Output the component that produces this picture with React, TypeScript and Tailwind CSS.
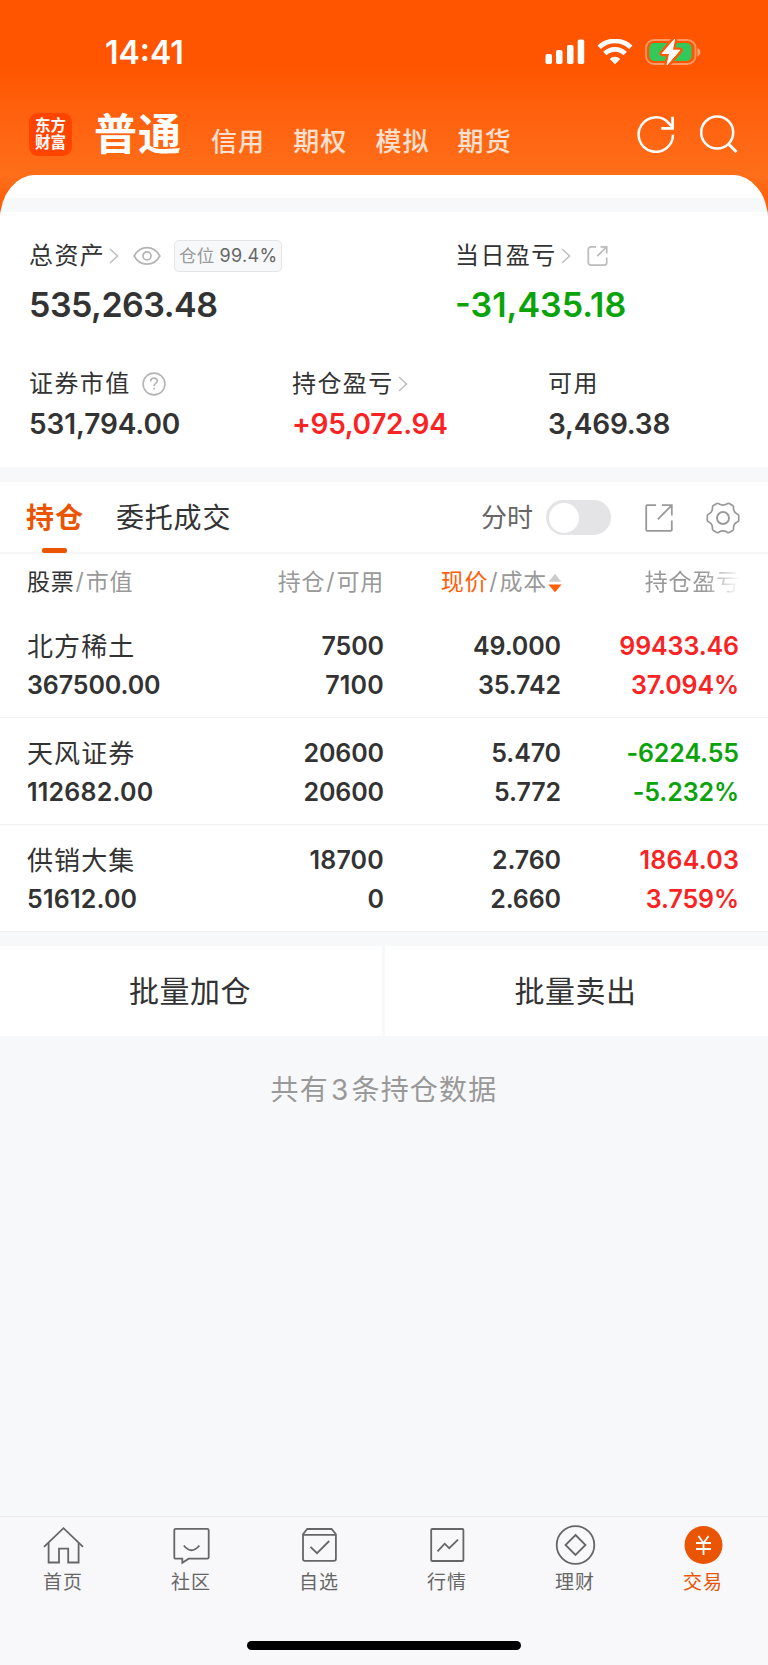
import type { ReactNode } from 'react';
import clsx from 'clsx';

type Tone = 'up' | 'down';

interface Holding {
  name: string;
  marketValue: string;
  amount: string;
  available: string;
  price: string;
  cost: string;
  profit: string;
  profitRate: string;
  tone: Tone;
}

const HOLDINGS: Holding[] = [
  {
    name: '北方稀土',
    marketValue: '367500.00',
    amount: '7500',
    available: '7100',
    price: '49.000',
    cost: '35.742',
    profit: '99433.46',
    profitRate: '37.094%',
    tone: 'up',
  },
  {
    name: '天风证券',
    marketValue: '112682.00',
    amount: '20600',
    available: '20600',
    price: '5.470',
    cost: '5.772',
    profit: '-6224.55',
    profitRate: '-5.232%',
    tone: 'down',
  },
  {
    name: '供销大集',
    marketValue: '51612.00',
    amount: '18700',
    available: '0',
    price: '2.760',
    cost: '2.660',
    profit: '1864.03',
    profitRate: '3.759%',
    tone: 'up',
  },
];

const ACCOUNT_TABS = ['信用', '期权', '模拟', '期货'];

function SignalIcon() {
  return (
    <svg width="40" height="26" viewBox="0 0 40 26" fill="#fff">
      <rect x="0.5" y="15" width="6.5" height="10" rx="1.8" />
      <rect x="11" y="11" width="6.5" height="14" rx="1.8" />
      <rect x="22" y="6" width="6.5" height="19" rx="1.8" />
      <rect x="32.7" y="0.5" width="6.5" height="24.5" rx="1.8" />
    </svg>
  );
}

function WifiIcon() {
  return (
    <svg width="36" height="26" viewBox="0 0 36 26" fill="none" stroke="#fff">
      <path d="M2.2 8.3a22.800 22.800 0 0 1 31.600 0" strokeWidth="4.800" />
      <path d="M7.800 14.500a14.600 14.600 0 0 1 20.400 0" strokeWidth="4.600" />
      <path d="M18 25.200l-5.300-5.200a7.600 7.600 0 0 1 10.600 0z" fill="#fff" stroke="none" />
    </svg>
  );
}

function BatteryIcon() {
  return (
    <svg width="57" height="28" viewBox="0 0 57 28" fill="none">
      <rect x="1" y="2" width="49.5" height="24" rx="8" stroke="#fff" strokeOpacity="0.4" strokeWidth="1.8" />
      <path d="M52.5 10v8.400c1.600-.7 2.800-2.300 2.800-4.200s-1.200-3.500-2.800-4.200z" fill="#fff" fillOpacity="0.5" />
      <rect x="4.200" y="5" width="42.500" height="18" rx="5" fill="#34c759" />
      <path
        d="M29.600 1 17.200 15.400h7.400L22 27.200 34.800 12.200h-7.400z"
        fill="#fff"
        stroke="#ff5a02"
        strokeWidth="5.500"
        strokeLinejoin="round"
        paintOrder="stroke"
      />
      <path d="M29.600 1.200 17.200 15.400h7.400L22 26.800 34.800 12.200h-7.400z" fill="#fff" stroke="#fff" strokeLinejoin="round" />
    </svg>
  );
}

function RefreshIcon() {
  return (
    <svg width="38" height="38" viewBox="0 0 38 38" fill="none" stroke="#fff" strokeWidth="2.500">
      <path d="M36 19.700A17.200 17.200 0 1 1 31.700 8.200L35.500 12.200" />
      <path d="M35.600 1.800v11.500H24.300" strokeWidth="2.800" />
    </svg>
  );
}

function SearchIcon() {
  return (
    <svg width="38" height="38" viewBox="0 0 38 38" fill="none" stroke="#fff" strokeWidth="2.500">
      <circle cx="17.200" cy="17.500" r="16" />
      <path d="M28.300 28.800l8.200 8.200" strokeWidth="3" />
    </svg>
  );
}

function Chevron() {
  return (
    <svg width="10" height="16" viewBox="0 0 10 16" fill="none" stroke="#bbb" strokeWidth="1.400">
      <path d="M1 1l7.600 7L1 15" />
    </svg>
  );
}

function EyeIcon() {
  return (
    <svg width="28" height="20" viewBox="0 0 28 20" fill="none" stroke="#b4b4b4" strokeWidth="1.700">
      <path d="M1.200 10C4 4.800 8.600 1.600 14 1.600S24 4.800 26.800 10C24 15.200 19.400 18.200 14 18.200S4 15.200 1.200 10z" />
      <circle cx="14" cy="9.900" r="4" />
    </svg>
  );
}

function SmallShareIcon() {
  return (
    <svg width="22" height="22" viewBox="0 0 22 22" fill="none" stroke="#bbb" strokeWidth="1.700">
      <path d="M9 1.800H4A2.700 2.700 0 0 0 1.300 4.500V17.400A2.700 2.700 0 0 0 4 20.100H17A2.700 2.700 0 0 0 19.700 17.400V12.500" />
      <path d="M13.500 1.800h6.200v6.700M19.500 2 10.200 11.200" />
    </svg>
  );
}

function HelpIcon() {
  return (
    <svg width="24" height="24" viewBox="0 0 24 24" fill="none" stroke="#b4b4b4" strokeWidth="1.600">
      <circle cx="12" cy="12" r="10.900" />
      <path d="M8.700 9.400c0-2 1.400-3.300 3.300-3.300s3.300 1.200 3.300 3c0 2.300-3.200 2.500-3.200 5" />
      <path d="M12.100 15.800v1.800" />
    </svg>
  );
}

function ShareIcon() {
  return (
    <svg width="30" height="30" viewBox="0 0 30 30" fill="none" stroke="#999" strokeWidth="1.800">
      <path d="M12 2.200H3.200Q2.200 2.200 2.200 3.200V26.800Q2.200 27.800 3.200 27.800H26.800Q27.800 27.800 27.800 26.800V17.500" />
      <path d="M18 2.200h9.800v10.200M27.600 2.400 13.800 16.400" />
    </svg>
  );
}

function GearIcon() {
  return (
    <svg width="34" height="32" viewBox="0 0 34 32" fill="none" stroke="#999" strokeWidth="1.700" strokeLinejoin="round">
      <path d="M10.800 1.500Q12 1 12.800 1.700Q17 4.400 21.200 1.700Q22 1 23.200 1.500L26.600 3.400Q27.600 4 27.500 5.200Q27.200 10.200 31.600 12.200Q32.700 12.700 32.700 13.800V18.200Q32.700 19.300 31.600 19.800Q27.200 21.800 27.500 26.800Q27.600 28 26.600 28.600L23.200 30.500Q22 31 21.200 30.300Q17 27.600 12.800 30.300Q12 31 10.800 30.500L7.400 28.600Q6.400 28 6.500 26.800Q6.800 21.800 2.400 19.800Q1.300 19.300 1.300 18.200V13.800Q1.300 12.700 2.400 12.200Q6.800 10.200 6.500 5.200Q6.400 4 7.400 3.400Z" />
      <circle cx="17" cy="16" r="6" strokeWidth="1.900" />
    </svg>
  );
}

function SortIcon() {
  return (
    <svg width="14" height="20" viewBox="0 0 14 20">
      <path d="M7 .8 13.400 8.800H.6z" fill="#ccc" />
      <path d="M7 19.200 13.600 11.400H.4z" fill="#ff5f0a" />
    </svg>
  );
}

const NAV_ITEMS: { label: string; icon: ReactNode }[] = [
  {
    label: '首页',
    icon: (
      <>
        <path d="M1 21.800 20.500 3.200 40 21.800" />
        <path d="M5.600 18v19.500H16V23.600h9.200v13.900h10.400V18" />
      </>
    ),
  },
  {
    label: '社区',
    icon: (
      <>
        <path d="M4.800 3.800H36.200Q37.700 3.800 37.700 5.300V32.200Q37.700 33.700 36.200 33.700H17.700L11.300 37.800V33.700H4.800Q3.300 33.700 3.300 32.200V5.300Q3.300 3.800 4.800 3.800Z" />
        <path d="M12.800 20.500q7.700 9.500 15.600 0" />
      </>
    ),
  },
  {
    label: '自选',
    icon: (
      <>
        <path d="M4 9.200 8.200 4H32.600L36.900 9.200V34Q36.900 35.900 35 35.900H5.900Q4 35.900 4 34ZM4 9.800H37" />
        <path d="M11.500 21.800 18 28.200 30.200 16" />
      </>
    ),
  },
  {
    label: '行情',
    icon: (
      <>
        <rect x="4.200" y="4" width="32.200" height="32" rx="1" />
        <path d="M10.500 26.300l7.200-7.600 4.500 4.500 8.800-8.500" />
      </>
    ),
  },
  {
    label: '理财',
    icon: (
      <>
        <circle cx="20.500" cy="20" r="18.800" />
        <path d="M20.500 10 30.500 20l-10 10-10-10z" />
      </>
    ),
  },
  {
    label: '交易',
    icon: (
      <>
        <circle cx="20.500" cy="20" r="19" fill="#ea5504" stroke="none" />
        <path d="M15.500 11l5 7.200 5-7.200M20.500 18v12M13 18h15M13 24h15" stroke="#fff" />
      </>
    ),
  },
];

function Header() {
  return (
    <header className="h-[219px] bg-linear-to-b from-[#ff5500] from-30% via-[#ff6e19] via-80% to-[#ff5500] text-white">
      <div className="flex h-[104px] items-center justify-between pl-[105px] pr-[66px]">
        <span className="mt-0.5 text-[32px] leading-none font-semibold">14:41</span>
        <div className="flex items-center gap-3">
          <SignalIcon />
          <WifiIcon />
          <BatteryIcon />
        </div>
      </div>
      <div className="flex h-[71px] items-start pl-[29px] pr-[30px]">
        <div className="mt-[9px] flex size-[43px] flex-col items-center justify-center rounded-[9px] bg-[#ff4400] pb-0.5 text-[15.5px] leading-[17px] font-bold">
          <span>东方</span>
          <span>财富</span>
        </div>
        <span className="mt-px ml-[22px] text-[43px] leading-[58px] font-bold tracking-[1px]">普通</span>
        <div className="mt-[18px] ml-[29px] flex gap-[28px] text-[26px] leading-[40px] font-medium text-white/80">
          {ACCOUNT_TABS.map((tab) => (
            <span key={tab} className="tracking-[1.1px]">
              {tab}
            </span>
          ))}
        </div>
        <div className="mt-[11px] ml-auto flex gap-[25px]">
          <RefreshIcon />
          <SearchIcon />
        </div>
      </div>
    </header>
  );
}

function Metric({
  label,
  value,
  className,
  valueClassName,
  children,
}: {
  label: string;
  value: string;
  className?: string;
  valueClassName?: string;
  children?: ReactNode;
}) {
  return (
    <div className={className}>
      <div className="flex h-9 items-center text-[24px] leading-9 tracking-[1.4px]">
        <span>{label}</span>
        {children}
      </div>
      <div className={clsx('font-semibold whitespace-nowrap', valueClassName)}>{value}</div>
    </div>
  );
}

function Assets() {
  return (
    <section className="h-[255px] bg-white pt-[26px]">
      <div className="flex pl-[29px]">
        <Metric
          label="总资产"
          value="535,263.48"
          className="w-[426px]"
          valueClassName="mt-[11px] text-[34px] leading-[40px] tracking-[-0.5px]"
        >
          <span className="ml-1">
            <Chevron />
          </span>
          <span className="ml-[14px]">
            <EyeIcon />
          </span>
          <span className="ml-[13px] flex h-8 w-[108px] items-center justify-center gap-[5px] rounded-[5px] border border-[#e4e5e8] bg-[#f7f8fa] text-[17.500px] tracking-[0.3px] text-[#999]">
            仓位 <span className="text-[18px] text-[#666]">99.4%</span>
          </span>
        </Metric>
        <Metric
          label="当日盈亏"
          value="-31,435.18"
          valueClassName="mt-[11px] text-[34px] leading-[40px] text-[#0aa30a]"
        >
          <span className="ml-1">
            <Chevron />
          </span>
          <span className="ml-4">
            <SmallShareIcon />
          </span>
        </Metric>
      </div>
      <div className="mt-[41px] flex pl-[29px]">
        <Metric
          label="证券市值"
          value="531,794.00"
          className="w-[263px]"
          valueClassName="mt-1 text-[28px] leading-9 tracking-[-0.1px]"
        >
          <span className="ml-[11px]">
            <HelpIcon />
          </span>
        </Metric>
        <Metric
          label="持仓盈亏"
          value="+95,072.94"
          className="w-[256px]"
          valueClassName="mt-1 text-[28px] leading-9 tracking-[-0.3px] text-[#fa2323]"
        >
          <span className="ml-1">
            <Chevron />
          </span>
        </Metric>
        <Metric label="可用" value="3,469.38" valueClassName="mt-1 text-[28px] leading-9 tracking-[-0.2px]" />
      </div>
    </section>
  );
}

function HoldingTabs() {
  return (
    <div className="flex h-[72px] items-start border-b-2 border-[#f5f6f8] pl-[26px]">
      <div className="flex flex-col items-center text-[#ea5504]">
        <span className="h-[66px] text-[28px] leading-[73px] font-bold tracking-[1px]">持仓</span>
        <span className="mr-px h-[5px] w-[25px] rounded-[2px] bg-[#ea5504]" />
      </div>
      <span className="ml-8 text-[28px] leading-[73px] tracking-[0.800px]">委托成交</span>
      <div className="ml-auto flex h-[71px] items-center pr-7">
        <span className="text-[26px] text-[#666]">分时</span>
        <span className="ml-[13px] flex h-[35px] w-[65px] items-center rounded-full bg-[#e4e4e7] px-[3px]">
          <span className="size-[30px] rounded-full bg-white" />
        </span>
        <span className="ml-[33px]">
          <ShareIcon />
        </span>
        <span className="ml-8">
          <GearIcon />
        </span>
      </div>
    </div>
  );
}

const COLUMNS = 'grid grid-cols-[197px_160px_177px_178px] pl-[27px]';

function HoldingHeader() {
  return (
    <div className={clsx(COLUMNS, 'h-[57px] text-[23px] leading-[57px] tracking-[0.8px] whitespace-nowrap text-[#999]')}>
      <div>
        <span className="text-[#333]">股票</span>
        <span className="px-px">/</span>市值
      </div>
      <div className="text-right">
        持仓<span className="px-px">/</span>可用
      </div>
      <div className="-mr-px flex items-center justify-end">
        <span className="text-[#ff5f0a]">现价</span>
        <span className="px-px">/</span>成本
        <span className="ml-px">
          <SortIcon />
        </span>
      </div>
      <div className="-mr-px mask-r-from-80% mask-r-to-100% text-right">持仓盈亏</div>
    </div>
  );
}

// the narrow "1" glyph needs slightly looser tracking to keep the columns even
function Figure({ children }: { children: string }) {
  return (
    <div className={children.includes('1') ? 'tracking-[0.2px]' : 'tracking-[-0.1px]'}>{children}</div>
  );
}

function HoldingRow({ holding }: { holding: Holding }) {
  return (
    <div
      className={clsx(
        COLUMNS,
        'h-[107px] border-b border-[#f0f1f3] pt-4 text-[25px] leading-[39px] font-semibold',
      )}
    >
      <div>
        <div className="text-[26px] font-normal tracking-[1.1px]">{holding.name}</div>
        <Figure>{holding.marketValue}</Figure>
      </div>
      <div className="text-right">
        <Figure>{holding.amount}</Figure>
        <Figure>{holding.available}</Figure>
      </div>
      <div className="text-right">
        <Figure>{holding.price}</Figure>
        <Figure>{holding.cost}</Figure>
      </div>
      <div className={clsx('text-right', holding.tone === 'up' ? 'text-[#fa2323]' : 'text-[#0aa30a]')}>
        <Figure>{holding.profit}</Figure>
        <Figure>{holding.profitRate}</Figure>
      </div>
    </div>
  );
}

function BottomNav() {
  return (
    <nav className="mt-auto h-[149px] border-t border-[#e9eaec] bg-[#f8f8fb]">
      <div className="mr-px -ml-px grid grid-cols-6 pt-2">
        {NAV_ITEMS.map(({ label, icon }) => {
          const active = label === '交易';
          return (
            <div
              key={label}
              className={clsx('flex flex-col items-center', active ? 'text-[#ea5504]' : 'text-[#666]')}
            >
              <svg width="41" height="40" viewBox="0 0 41 40" fill="none" stroke="currentColor" strokeWidth="1.800">
                {icon}
              </svg>
              <span className="mt-[3px] text-[19px] leading-[30px] tracking-[1px]">{label}</span>
            </div>
          );
        })}
      </div>
      <div className="mx-auto mt-[43px] h-[9px] w-[274px] rounded-full bg-black" />
    </nav>
  );
}

export default function App() {
  return (
    <div className="flex h-[1665px] w-[768px] flex-col overflow-hidden bg-[#f7f8fa] font-['Inter','Noto_Sans_CJK_SC',sans-serif] text-[#333]">
      <Header />
      <main className="-mt-11 overflow-hidden bg-[#f7f8fa] [border-radius:36px_36px_0_0/44px_44px_0_0]">
        <div className="h-[23px] bg-white" />
        <div className="mt-[14px]">
          <Assets />
        </div>
        <section className="mt-[15px] bg-white">
          <HoldingTabs />
          <HoldingHeader />
          {HOLDINGS.map((holding) => (
            <HoldingRow key={holding.name} holding={holding} />
          ))}
        </section>
        <div className="mt-[14px] flex h-[90px] gap-[3px] text-[30px] leading-[90px] tracking-[0.5px]">
          <button className="w-[382px] bg-white pr-0.5">批量加仓</button>
          <button className="flex-1 bg-white pr-0.5">批量卖出</button>
        </div>
        <p className="mt-[34px] text-center text-[28px] leading-10 tracking-[1.2px] text-[#999]">
          共有<span className="px-0.5">3</span>条持仓数据
        </p>
      </main>
      <BottomNav />
    </div>
  );
}
